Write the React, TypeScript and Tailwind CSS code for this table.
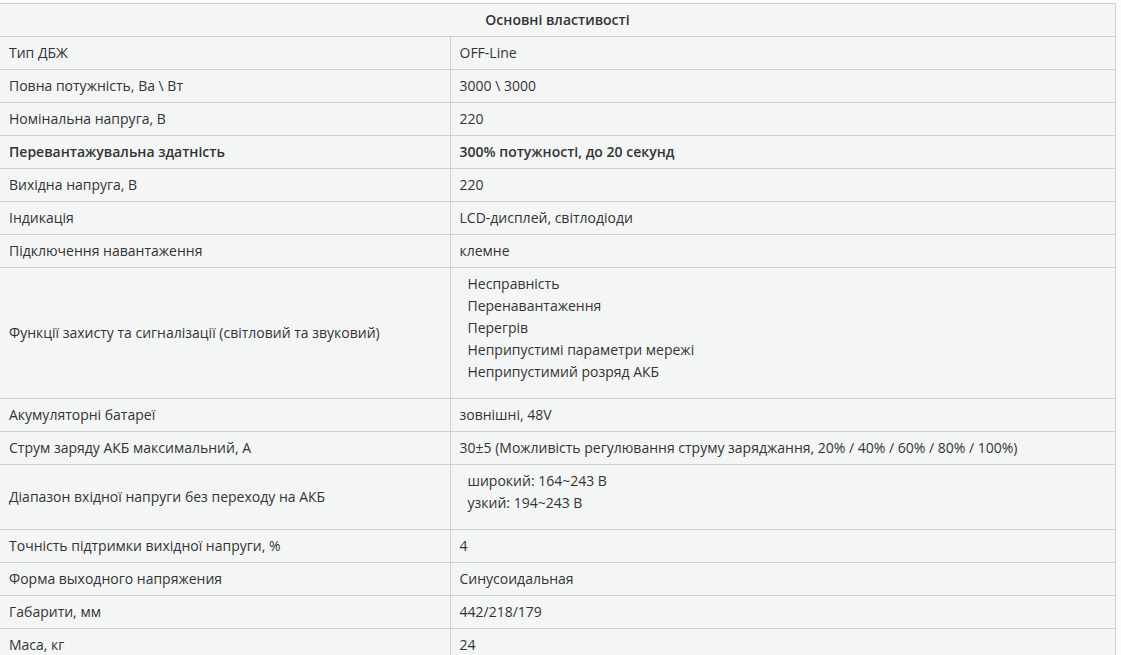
const rows: { label: string; value: string | string[]; bold?: boolean }[] = [
  { label: 'Тип ДБЖ', value: 'OFF-Line' },
  { label: 'Повна потужність, Ва \\ Вт', value: '3000 \\ 3000' },
  { label: 'Номінальна напруга, В', value: '220' },
  { label: 'Перевантажувальна здатність', value: '300% потужності, до 20 секунд', bold: true },
  { label: 'Вихідна напруга, В', value: '220' },
  { label: 'Індикація', value: 'LCD-дисплей, світлодіоди' },
  { label: 'Підключення навантаження', value: 'клемне' },
  {
    label: 'Функції захисту та сигналізації (світловий та звуковий)',
    value: [
      'Несправність',
      'Перенавантаження',
      'Перегрів',
      'Неприпустимі параметри мережі',
      'Неприпустимий розряд АКБ',
    ],
  },
  { label: 'Акумуляторні батареї', value: 'зовнішні, 48V' },
  {
    label: 'Струм заряду АКБ максимальний, А',
    value: '30±5 (Можливість регулювання струму заряджання, 20% / 40% / 60% / 80% / 100%)',
  },
  {
    label: 'Діапазон вхідної напруги без переходу на АКБ',
    value: ['широкий: 164~243 В', 'узкий: 194~243 В'],
  },
  { label: 'Точність підтримки вихідної напруги, %', value: '4' },
  { label: 'Форма выходного напряжения', value: 'Синусоидальная' },
  { label: 'Габарити, мм', value: '442/218/179' },
  { label: 'Маса, кг', value: '24' },
];

export default function App() {
  return (
    <div className="min-h-screen bg-[#fbfcfc] pt-[3px] font-['Open_Sans',sans-serif] text-[14px] text-[#333]">
      <table className="w-[1116px] border-collapse bg-[#f4f6f6]">
        <thead>
          <tr>
            <th
              colSpan={2}
              className="border-y border-r border-[#cfd2d2] py-[5px] text-center font-semibold leading-[22px]"
            >
              Основні властивості
            </th>
          </tr>
        </thead>
        <tbody>
          {rows.map((row) => (
            <tr key={row.label} className={row.bold ? 'font-semibold' : ''}>
              <td className="w-[450px] border-y border-r border-[#cfd2d2] px-[9px] py-[5px] align-middle leading-[22px]">
                {row.label}
              </td>
              <td className="border-y border-r border-[#cfd2d2] px-[9px] py-[5px] align-middle leading-[22px]">
                {Array.isArray(row.value) ? (
                  <div className="pb-[10px] pl-2">
                    {row.value.map((line) => (
                      <div key={line}>{line}</div>
                    ))}
                  </div>
                ) : (
                  row.value
                )}
              </td>
            </tr>
          ))}
        </tbody>
      </table>
    </div>
  );
}
